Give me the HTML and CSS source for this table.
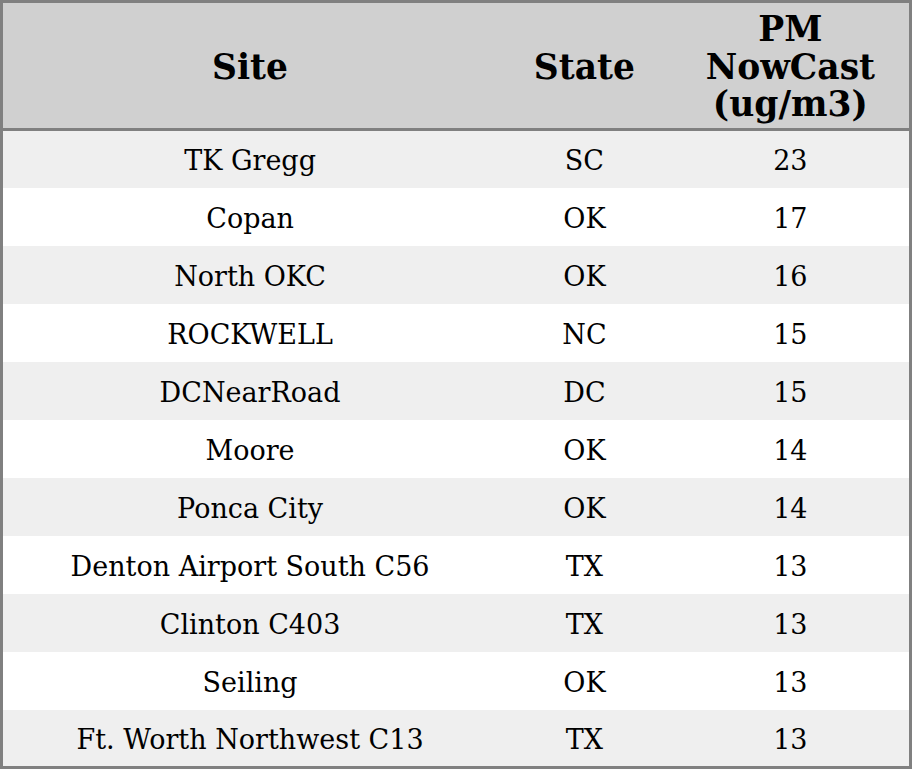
FILE: index.html
```html
<!DOCTYPE html>
<html>
<head>
<meta charset="utf-8">
<link rel="stylesheet" href="styles.css">
</head>
<body>
<table class="data">
  <thead>
    <tr>
      <th class="c-site">Site</th>
      <th class="c-state">State</th>
      <th class="c-pm">PM NowCast (ug/m3)</th>
    </tr>
  </thead>
  <tbody>
    <tr><td>TK Gregg</td><td>SC</td><td>23</td></tr>
    <tr><td>Copan</td><td>OK</td><td>17</td></tr>
    <tr><td>North OKC</td><td>OK</td><td>16</td></tr>
    <tr><td>ROCKWELL</td><td>NC</td><td>15</td></tr>
    <tr><td>DCNearRoad</td><td>DC</td><td>15</td></tr>
    <tr><td>Moore</td><td>OK</td><td>14</td></tr>
    <tr><td>Ponca City</td><td>OK</td><td>14</td></tr>
    <tr><td>Denton Airport South C56</td><td>TX</td><td>13</td></tr>
    <tr><td>Clinton C403</td><td>TX</td><td>13</td></tr>
    <tr><td>Seiling</td><td>OK</td><td>13</td></tr>
    <tr><td>Ft. Worth Northwest C13</td><td>TX</td><td>13</td></tr>
  </tbody>
</table>
</body>
</html>
```
FILE: styles.css
```css
html, body {
  margin: 0;
  padding: 0;
  background: #ffffff;
}
.data {
  width: 912px;
  height: 769px;
  border-collapse: collapse;
  border: 3px solid #808080;
  font-family: "DejaVu Serif", serif;
  color: #000;
  box-sizing: border-box;
}
.data th {
  background: #d0d0d0;
  font-size: 34.5px;
  font-weight: bold;
  line-height: 37.5px;
  height: 128px;
  padding: 4px 6px 0 6px;
  text-align: center;
  vertical-align: middle;
  border-bottom: 3px solid #808080;
  box-sizing: border-box;
}
.c-site { width: 494px; }
.c-state { width: 174px; }
.c-pm { width: 238px; }
.data td {
  font-size: 27px;
  text-align: center;
  vertical-align: middle;
  padding: 3px 0 0 0;
  height: 57.7px;
  box-sizing: border-box;
}
.data tbody tr:nth-child(odd) td {
  background: #efefef;
}
.data tbody tr:nth-child(even) td {
  background: #ffffff;
}
```
